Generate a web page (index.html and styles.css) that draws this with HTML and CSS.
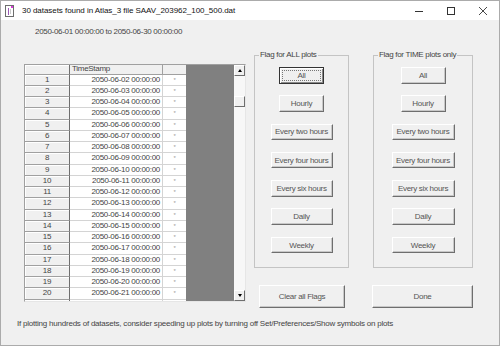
FILE: index.html
```html
<!DOCTYPE html>
<html lang="en">
<head>
    <meta charset="UTF-8">
    <meta name="viewport" content="width=device-width, initial-scale=1.0">
    <title>Flag datasets</title>
    <link rel="stylesheet" href="styles.css">
</head>
<body>
    <div class="window">
        <div class="titlebar">
            <svg class="app-icon" width="9" height="12" viewBox="0 0 9 12">
                <rect x="0.5" y="0.5" width="8" height="11" fill="#fff" stroke="#6d6d6d"/>
                <line x1="3.5" y1="3" x2="3.5" y2="10" stroke="#9b59b6"/>
                <rect x="6" y="1" width="2" height="2" fill="#d63bd6"/>
                <line x1="5.5" y1="4" x2="5.5" y2="9" stroke="#c9c9c9"/>
            </svg>
            <span class="title">30 datasets found in Atlas_3 file SAAV_203962_100_500.dat</span>
            <div class="controls">
                <div class="ctl">
                    <svg width="10" height="10" viewBox="0 0 10 10"><line x1="1" y1="5.5" x2="9" y2="5.5" stroke="#333"/></svg>
                </div>
                <div class="ctl">
                    <svg width="10" height="10" viewBox="0 0 10 10"><rect x="1.5" y="1.5" width="7" height="7" fill="none" stroke="#333"/></svg>
                </div>
                <div class="ctl">
                    <svg width="10" height="10" viewBox="0 0 10 10"><path d="M1 1 L9 9 M9 1 L1 9" stroke="#333" stroke-width="0.9"/></svg>
                </div>
            </div>
        </div>

        <div class="range">2050-06-01 00:00:00 to 2050-06-30 00:00:00</div>

        <div class="main">
            <div class="grid">
                <div class="cells">
                    <div class="row head">
                        <div class="rh"></div>
                        <div class="ts">TimeStamp</div>
                        <div class="fl"></div>
                    </div>
                    <div class="row"><div class="rh">1</div><div class="ts">2050-06-02 00:00:00</div><div class="fl">*</div></div>
                    <div class="row"><div class="rh">2</div><div class="ts">2050-06-03 00:00:00</div><div class="fl">*</div></div>
                    <div class="row"><div class="rh">3</div><div class="ts">2050-06-04 00:00:00</div><div class="fl">*</div></div>
                    <div class="row"><div class="rh">4</div><div class="ts">2050-06-05 00:00:00</div><div class="fl">*</div></div>
                    <div class="row"><div class="rh">5</div><div class="ts">2050-06-06 00:00:00</div><div class="fl">*</div></div>
                    <div class="row"><div class="rh">6</div><div class="ts">2050-06-07 00:00:00</div><div class="fl">*</div></div>
                    <div class="row"><div class="rh">7</div><div class="ts">2050-06-08 00:00:00</div><div class="fl">*</div></div>
                    <div class="row"><div class="rh">8</div><div class="ts">2050-06-09 00:00:00</div><div class="fl">*</div></div>
                    <div class="row"><div class="rh">9</div><div class="ts">2050-06-10 00:00:00</div><div class="fl">*</div></div>
                    <div class="row"><div class="rh">10</div><div class="ts">2050-06-11 00:00:00</div><div class="fl">*</div></div>
                    <div class="row"><div class="rh">11</div><div class="ts">2050-06-12 00:00:00</div><div class="fl">*</div></div>
                    <div class="row"><div class="rh">12</div><div class="ts">2050-06-13 00:00:00</div><div class="fl">*</div></div>
                    <div class="row"><div class="rh">13</div><div class="ts">2050-06-14 00:00:00</div><div class="fl">*</div></div>
                    <div class="row"><div class="rh">14</div><div class="ts">2050-06-15 00:00:00</div><div class="fl">*</div></div>
                    <div class="row"><div class="rh">15</div><div class="ts">2050-06-16 00:00:00</div><div class="fl">*</div></div>
                    <div class="row"><div class="rh">16</div><div class="ts">2050-06-17 00:00:00</div><div class="fl">*</div></div>
                    <div class="row"><div class="rh">17</div><div class="ts">2050-06-18 00:00:00</div><div class="fl">*</div></div>
                    <div class="row"><div class="rh">18</div><div class="ts">2050-06-19 00:00:00</div><div class="fl">*</div></div>
                    <div class="row"><div class="rh">19</div><div class="ts">2050-06-20 00:00:00</div><div class="fl">*</div></div>
                    <div class="row"><div class="rh">20</div><div class="ts">2050-06-21 00:00:00</div><div class="fl">*</div></div>
                    <div class="row"><div class="rh"></div><div class="ts"></div><div class="fl"></div></div>
                </div>
                <div class="empty"></div>
                <div class="vscroll">
                    <div class="arrow"><span class="tri up"></span></div>
                    <div class="thumb"></div>
                    <div class="arrow bottom"><span class="tri down"></span></div>
                </div>
            </div>

            <div class="panel">
                <div class="groups">
                    <fieldset class="group all-plots">
                        <legend>Flag for ALL plots</legend>
                        <button class="btn short default">All</button>
                        <button class="btn short">Hourly</button>
                        <button class="btn">Every two hours</button>
                        <button class="btn">Every four hours</button>
                        <button class="btn">Every six hours</button>
                        <button class="btn">Daily</button>
                        <button class="btn">Weekly</button>
                    </fieldset>
                    <fieldset class="group time-plots">
                        <legend>Flag for TIME plots only</legend>
                        <button class="btn short">All</button>
                        <button class="btn short">Hourly</button>
                        <button class="btn">Every two hours</button>
                        <button class="btn">Every four hours</button>
                        <button class="btn">Every six hours</button>
                        <button class="btn">Daily</button>
                        <button class="btn">Weekly</button>
                    </fieldset>
                </div>
                <div class="actions">
                    <button class="btn big clear">Clear all Flags</button>
                    <button class="btn big done">Done</button>
                </div>
            </div>
        </div>

        <div class="hint">If plotting hundreds of datasets, consider speeding up plots by turning off Set/Preferences/Show symbols on plots</div>
    </div>
</body>
</html>
```

FILE: styles.css
```css
body {
    margin: 0;
    font-family: "Liberation Sans", Arial, sans-serif;
    background: #f0f0f0;
}
.window {
    width: 500px;
    height: 346px;
    box-sizing: border-box;
    border: 1px solid #ababab;
    background: #f0f0f0;
    display: flex;
    flex-direction: column;
    color: #444;
    font-size: 8px;
    letter-spacing: -0.3px;
}
.titlebar {
    height: 19px;
    flex: none;
    background: #fff;
    display: flex;
    align-items: center;
    padding-left: 4px;
}
.app-icon {
    margin-right: 8px;
}
.title {
    font-size: 8px;
    letter-spacing: -0.05px;
    color: #111;
}
.controls {
    margin-left: auto;
    display: flex;
    height: 100%;
}
.ctl {
    width: 32px;
    display: flex;
    align-items: center;
    justify-content: center;
}
.range {
    margin-top: 7px;
    padding-left: 34px;
    line-height: 10px;
}
.main {
    margin-top: 13px;
    padding-left: 23px;
    display: flex;
    align-items: flex-start;
}

/* data grid */
.grid {
    margin-top: 14px;
    width: 222px;
    height: 238px;
    box-sizing: border-box;
    display: flex;
    border: 1px solid;
    border-color: #a0a0a0 #e6e6e6 #e6e6e6 #a0a0a0;
}
.cells {
    width: 161px;
    overflow: hidden;
}
.row {
    display: grid;
    grid-template-columns: 45px 93px 23px;
    height: 11.25px;
    line-height: 10.25px;
}
.row.head {
    height: 9.5px;
    line-height: 8.5px;
}
.row > div {
    box-sizing: border-box;
    border-bottom: 1px solid #d4d4d4;
    white-space: nowrap;
}
.rh {
    background: #f0f0f0;
    text-align: center;
    border-right: 1px solid #6e6e6e;
    box-shadow: inset 1px 1px #fff;
    border-bottom-color: #a0a0a0 !important;
}
.ts {
    background: #fff;
    text-align: right;
    padding-right: 2px;
    border-right: 1px solid #d4d4d4;
}
.fl {
    background: #fff;
    text-align: center;
    color: #9a9a9a;
    font-size: 6px;
}
.head > div {
    background: #f0f0f0;
    border-bottom-color: #a0a0a0;
}
.head .ts {
    text-align: left;
    padding-left: 2px;
    border-right-color: #a0a0a0;
}
.empty {
    width: 48px;
    background: #808080;
}
.vscroll {
    width: 11px;
    background: #f7f7f7;
    display: flex;
    flex-direction: column;
}
.arrow {
    height: 11px;
    box-sizing: border-box;
    background: #f0f0f0;
    border: 1px solid;
    border-color: #fff #6e6e6e #6e6e6e #fff;
    display: flex;
    align-items: center;
    justify-content: center;
}
.arrow.bottom {
    margin-top: auto;
}
.tri {
    width: 0;
    height: 0;
    border-left: 2.5px solid transparent;
    border-right: 2.5px solid transparent;
}
.tri.up {
    border-bottom: 3px solid #000;
}
.tri.down {
    border-top: 3px solid #000;
}
.thumb {
    margin-top: 20px;
    height: 11px;
    box-sizing: border-box;
    background: #f0f0f0;
    border: 1px solid;
    border-color: #fff #6e6e6e #6e6e6e #fff;
}

/* flag panel */
.panel {
    margin-left: 8px;
}
.groups {
    display: flex;
    gap: 24px;
}
.group {
    margin: 0;
    min-width: 0;
    box-sizing: border-box;
    border: 1px solid #c4c4c4;
    padding: 7px 0 14px;
    display: flex;
    flex-direction: column;
    align-items: center;
    gap: 11.8px;
}
.all-plots {
    width: 95px;
}
.time-plots {
    width: 100px;
}
.group legend {
    margin-left: 4px;
    padding: 0 1px;
    line-height: 10px;
}
.btn {
    font-family: inherit;
    font-size: 8px;
    letter-spacing: -0.3px;
    color: #555;
    width: 62px;
    height: 16.5px;
    padding: 0;
    margin: 0;
    box-sizing: border-box;
    background: #f0f0f0;
    border: 1px solid;
    border-color: #fff #6e6e6e #6e6e6e #fff;
    box-shadow: inset -1px -1px #c8c8c8;
}
.time-plots .btn {
    width: 63px;
}
.btn.short,
.time-plots .btn.short {
    width: 45px;
}
.btn.default {
    border-color: #333;
    box-shadow: inset 1px 1px #fff, inset -1px -1px #8a8a8a;
    outline: 1px dotted #777;
    outline-offset: -4px;
}
.actions {
    display: flex;
    margin-top: 17px;
}
.btn.big {
    height: 23px;
}
.clear {
    margin-left: 5px;
    width: 86px;
}
.done {
    margin-left: 27px;
    width: 101px;
}
.hint {
    margin-top: 11px;
    padding-left: 16px;
    line-height: 10px;
    letter-spacing: -0.22px;
    white-space: nowrap;
}
```
